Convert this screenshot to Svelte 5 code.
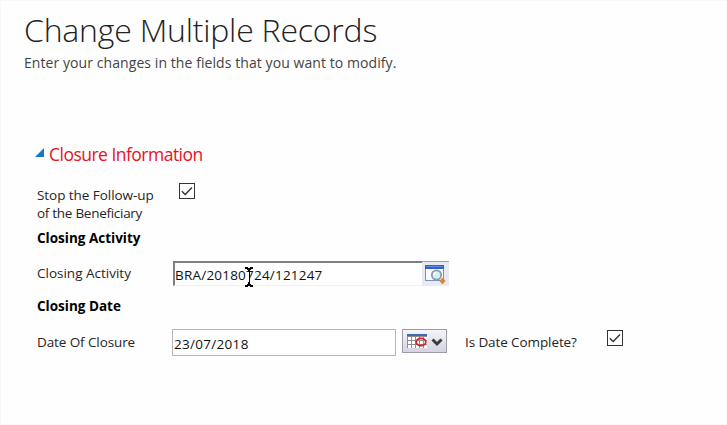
<script>
  let stopFollowUp = $state(true);
  let dateComplete = $state(true);
  let activity = $state('BRA/20180724/121247');
  let closureDate = $state('23/07/2018');
</script>

{#snippet tick()}
  <svg width="16" height="16" viewBox="0 0 16 16"><path d="M2.8 8.2 L6.2 11.4 L13 4.6" fill="none" stroke="#333" stroke-width="1.4" /></svg>
{/snippet}

<main class="dialog">
  <header>
    <h1>Change Multiple Records</h1>
    <p>Enter your changes in the fields that you want to modify.</p>
  </header>

  <section>
    <h2>
      <svg width="9" height="9" viewBox="0 0 9 9"><path d="M9 0 V9 H0 Z" fill="#1479c9" /></svg>
      <span>Closure Information</span>
    </h2>

    <div class="row stop">
      <div class="label"><span class="l1">Stop the Follow-up</span><br /><span class="l2">of the Beneficiary</span></div>
      <button class="check" aria-label="Stop the Follow-up" onclick={() => (stopFollowUp = !stopFollowUp)}>
        {#if stopFollowUp}{@render tick()}{/if}
      </button>
    </div>

    <h3>Closing Activity</h3>

    <div class="row activity">
      <div class="label">Closing Activity</div>
      <div class="lookup">
        <div class="lookup-text">{activity}</div>
        <button class="lookup-btn" aria-label="Lookup">
          <svg width="22" height="22" viewBox="0 0 22 22">
            <rect x="0.5" y="1.5" width="18" height="15" fill="#f8fafd" stroke="#7e8fba" />
            <rect x="0" y="1" width="19" height="4" fill="#2f5fd0" />
            <rect x="1" y="2" width="17" height="1" fill="#5f8ee6" />
            <path d="M17.5 13.8 L20.7 17 L17.5 20.2 L14.3 17 Z" fill="#d08a35" />
            <circle cx="11.5" cy="11" r="4.7" fill="#d3eeee" stroke="#8c9bab" stroke-width="1.8" />
            <path d="M9 11 a2.7 2.7 0 0 1 2.5 -2.6" fill="none" stroke="#fff" stroke-width="1.4" />
          </svg>
        </button>
        <svg class="cursor" width="8" height="20" viewBox="0 0 8 20" shape-rendering="crispEdges">
          <path d="M0 0h3v1h2v-1h3v2h-2v1h-1v14h1v1h2v2h-3v-1h-2v1h-3v-2h2v-1h1v-14h-1v-1h-2z" fill="#000" />
          <path d="M3 5h1v10h-1z" fill="#fff" />
        </svg>
      </div>
    </div>

    <h3>Closing Date</h3>

    <div class="row date">
      <div class="label l4">Date Of Closure</div>
      <div class="date-input">{closureDate}</div>
      <button class="date-btn" aria-label="Pick a date">
        <svg width="43" height="22" viewBox="0 0 43 22">
          <rect x="4" y="5" width="20" height="13" fill="#8d8d8d" />
          <rect x="4" y="4" width="20" height="2" fill="#3e68b4" />
          <g fill="#fff">
            {#each [7, 11, 15] as y}
              {#each [5, 9, 13, 17, 21] as x}
                <rect {x} {y} width="3" height="3" />
              {/each}
            {/each}
          </g>
          <ellipse cx="18" cy="12" rx="4.8" ry="3.6" fill="none" stroke="#e01b24" stroke-width="1.8" />
          <path d="M29.5 9.5 L34 14 L38.5 9.5" fill="none" stroke="#3c3c3c" stroke-width="3" />
        </svg>
      </button>
      <div class="label complete">Is Date Complete?</div>
      <button class="check" aria-label="Is Date Complete?" onclick={() => (dateComplete = !dateComplete)}>
        {#if dateComplete}{@render tick()}{/if}
      </button>
    </div>
  </section>
</main>

<style>
  .dialog {
    box-sizing: border-box;
    width: 727px;
    height: 425px;
    border: 1px solid #f8f8f8;
    background: #fefefe;
    color: #262626;
    font-family: 'Open Sans', 'Noto Sans', sans-serif;
    font-size: 13.5px;
    overflow: hidden;
    white-space: nowrap;
  }
  h1, h2, h3, p { margin: 0; }
  button { padding: 0; margin: 0; font: inherit; }
  svg { display: block; }
  header { padding: 7px 0 0 23px; height: 138px; box-sizing: border-box; }
  h1 { font-size: 32px; line-height: 44px; font-weight: 300; color: #222; letter-spacing: -0.21px; }
  p { font-size: 14px; line-height: 22px; color: #444; letter-spacing: 0.075px; }
  section { padding-left: 34px; }
  h2 {
    display: flex;
    gap: 5px;
    height: 43px;
    font-size: 17.5px;
    line-height: 30px;
    font-weight: 400;
    color: #e81123;
    letter-spacing: -0.52px;
  }
  h2 svg { margin-top: 9px; }
  .row { display: flex; align-items: flex-start; padding-left: 2px; }
  .label { width: 135px; line-height: 18px; }
  .l1 { letter-spacing: -0.05px; }
  .l2 { letter-spacing: -0.28px; }
  .l4 { letter-spacing: -0.1px; }
  .stop { height: 47px; }
  .stop .label { width: 142px; padding-top: 4px; }
  .check {
    box-sizing: border-box;
    width: 16px;
    height: 16px;
    border: 1px solid #333;
    background: #fff;
  }
  .check svg { margin: -1px; }
  .stop .check { margin-top: 1px; }
  h3 { height: 32px; padding-left: 2px; font-size: 13.5px; line-height: 19px; font-weight: 700; color: #000; }
  .activity { height: 36px; }
  .activity .label { padding-top: 3px; }
  .lookup { position: relative; display: flex; width: 276px; height: 25px; margin-left: 1px; }
  .lookup-text {
    box-sizing: border-box;
    width: 249px;
    border-top: 2px solid #7f7f7f;
    border-left: 2px solid #7f7f7f;
    border-bottom: 1px solid #f0f0f0;
    background: #fff;
    line-height: 25px;
    letter-spacing: 0.21px;
    color: #111;
  }
  .lookup-btn {
    box-sizing: border-box;
    width: 27px;
    border: 0;
    border-top: 1px solid #a0a0a0;
    background: #e9e9f3;
    padding: 1px 0 0 3px;
  }
  .cursor { position: absolute; left: 72px; top: 6px; }
  .date .label { padding-top: 4px; }
  .date-input {
    box-sizing: border-box;
    width: 224px;
    height: 27px;
    border: 1px solid #b8b8b8;
    background: #fff;
    padding-left: 1px;
    line-height: 29px;
    letter-spacing: 0.3px;
    color: #111;
  }
  .date-btn {
    box-sizing: border-box;
    width: 45px;
    height: 24px;
    margin-left: 6px;
    border: 1px solid #9c9ca8;
    background: linear-gradient(#f4f4fa, #d3d3e2);
  }
  .date .complete { width: 142px; margin-left: 18px; letter-spacing: -0.1px; }
  .date .check { margin-top: 1px; }
</style>
